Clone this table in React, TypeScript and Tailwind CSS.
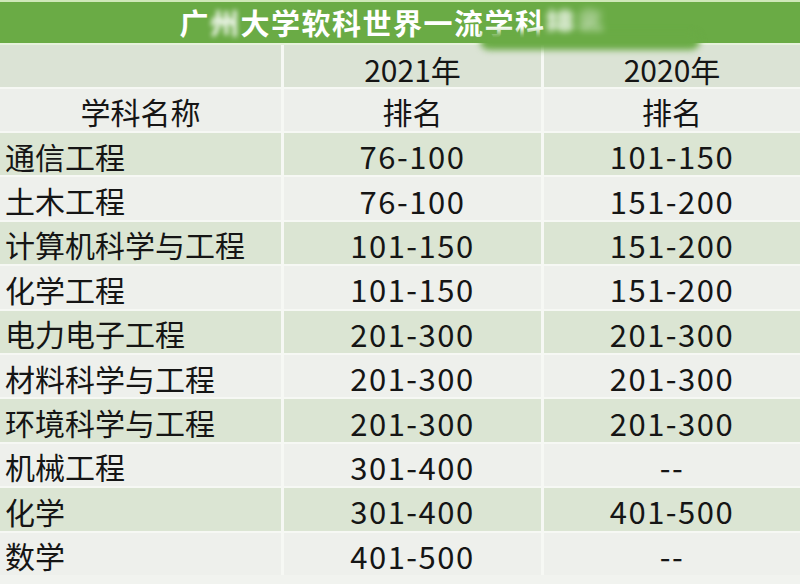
import React from "react";

const rows: [string, string, string][] = [
  ["通信工程", "76-100", "101-150"],
  ["土木工程", "76-100", "151-200"],
  ["计算机科学与工程", "101-150", "151-200"],
  ["化学工程", "101-150", "151-200"],
  ["电力电子工程", "201-300", "201-300"],
  ["材料科学与工程", "201-300", "201-300"],
  ["环境科学与工程", "201-300", "201-300"],
  ["机械工程", "301-400", "--"],
  ["化学", "301-400", "401-500"],
  ["数学", "401-500", "--"],
];

const font = { fontFamily: '"Noto Sans CJK SC", "Noto Sans", sans-serif' };

export default function App() {
  return (
    <div
      className="w-[800px] h-[584px] overflow-hidden bg-[#f1f3ef] text-[#151515] flex flex-col"
      style={font}
    >
      <div className="h-[2px] bg-[#cfe8b8]" />
      <div className="relative h-[41px] bg-[#6aab45] flex items-center justify-center">
        <div className="text-white font-bold text-[29px] leading-none tracking-[1.5px] pr-[14px]">
          <span>广</span>
          <span className="inline-block blur-[2.5px]">州</span>
          <span>大学软科世界一流学科</span>
          <span className="inline-block blur-[3px]">排</span>
          <span className="inline-block blur-[4px] opacity-60">名</span>
        </div>
        <div className="absolute left-[480px] top-[30px] w-[220px] h-[18px] rounded-full bg-[#6aab45] blur-[3px]" />
      </div>
      <div className="h-[2px] bg-[#e6f2dc]" />
      <div className="grid grid-cols-[281px_257px_1fr] gap-x-[3px] gap-y-[2px] bg-[#f6f8f4] text-[30px] leading-none">
        <div className="h-[42px] bg-[#dbe3d5]" />
        <div className="h-[42px] bg-[#dbe3d5] flex items-center justify-center pt-[6px]">2021年</div>
        <div className="h-[42px] bg-[#dbe3d5] flex items-center justify-center pt-[6px]">2020年</div>
        <div className="h-[42px] bg-[#edefeb] flex items-center justify-center pt-[2px]">学科名称</div>
        <div className="h-[42px] bg-[#edefeb] flex items-center justify-center pt-[2px]">排名</div>
        <div className="h-[42px] bg-[#edefeb] flex items-center justify-center pt-[2px]">排名</div>
        {rows.map((r, i) => {
          const bg = i % 2 === 0 ? "bg-[#dbe5d3]" : "bg-[#eef0ec]";
          return (
            <React.Fragment key={i}>
              <div className={`h-[42.4px] ${bg} flex items-center pl-[5px] pt-[3px]`}>{r[0]}</div>
              <div className={`h-[42.4px] ${bg} flex items-center justify-center pt-[3px] text-[31px] tracking-[1.5px]`}>{r[1]}</div>
              <div className={`h-[42.4px] ${bg} flex items-center justify-center pt-[3px] text-[31px] tracking-[1.5px]`}>{r[2]}</div>
            </React.Fragment>
          );
        })}
      </div>
    </div>
  );
}
